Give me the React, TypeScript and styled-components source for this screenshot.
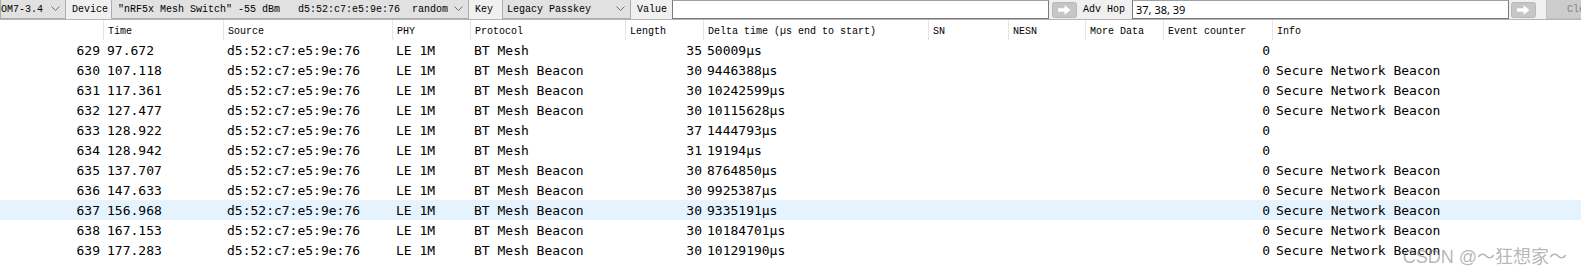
import styled, { createGlobalStyle } from 'styled-components'

const GlobalStyle = createGlobalStyle`
  html, body {
    margin: 0;
    padding: 0;
    background: #ffffff;
  }
  body {
    width: 1581px;
    height: 275px;
    overflow: hidden;
  }
`

const Page = styled.div`
  position: relative;
  width: 1581px;
  height: 275px;
  overflow: hidden;
  background: #ffffff;
`

const Toolbar = styled.div`
  display: flex;
  align-items: stretch;
  height: 20px;
  box-sizing: border-box;
  background: #f0f0f0;
  border-bottom: 1px solid #b4b4b4;
  font-family: "Liberation Mono", "DejaVu Sans Mono", monospace;
  font-size: 10px;
  color: #000;
  white-space: pre;
`

const Combo = styled.div<{ $w: number; $pl?: number }>`
  display: flex;
  align-items: center;
  justify-content: space-between;
  width: ${({ $w }) => $w}px;
  flex: none;
  box-sizing: border-box;
  height: 19px;
  padding: 0 5px 0 ${({ $pl }) => $pl ?? 4}px;
  background: #e1e1e1;
  border: 1px solid #adadad;
  border-top: none;
`

const Label = styled.div<{ $w: number }>`
  display: flex;
  align-items: center;
  width: ${({ $w }) => $w}px;
  flex: none;
  box-sizing: border-box;
  padding-left: 6px;
`

const TextInput = styled.div<{ $w: number }>`
  display: flex;
  align-items: center;
  width: ${({ $w }) => $w}px;
  flex: none;
  box-sizing: border-box;
  height: 19px;
  padding-left: 3px;
  background: #ffffff;
  border: 1px solid #7a7a7a;
  border-top-color: #a0a0a0;
  font-family: "Noto Sans", "Liberation Sans", sans-serif;
  font-size: 11px;
`

const ArrowButton = styled.div<{ $ml: number }>`
  display: flex;
  align-items: center;
  flex: none;
  margin-left: ${({ $ml }) => $ml}px;
  height: 19px;
`

const ClearButton = styled.div`
  display: flex;
  align-items: center;
  flex: 1;
  box-sizing: border-box;
  height: 19px;
  margin-left: 10px;
  padding-left: 20px;
  background: #cccccc;
  border: 1px solid #bfbfbf;
  border-top: none;
  color: #838383;
`

const Table = styled.div`
  display: flex;
  flex-direction: column;
`

const columns = '103px 120px 169px 78px 155px 78px 225px 80px 77px 78px 109px 1fr'

const HeaderRow = styled.div`
  display: grid;
  grid-template-columns: ${columns};
  height: 20px;
  font-family: "Liberation Mono", "DejaVu Sans Mono", monospace;
  font-size: 10px;
  color: #000;
`

const HeaderCell = styled.div<{ $first?: boolean }>`
  display: flex;
  align-items: center;
  padding: 2px 0 0 4px;
  border-left: ${({ $first }) => ($first ? 'none' : '1px solid #e5e5e5')};
  white-space: pre;
  overflow: hidden;
`

const Row = styled.div<{ $selected?: boolean }>`
  display: grid;
  grid-template-columns: ${columns};
  height: 20px;
  align-items: center;
  background: ${({ $selected }) => ($selected ? '#e5f3ff' : 'transparent')};
  font-family: "DejaVu Sans Mono", "Liberation Mono", monospace;
  font-size: 13px;
  color: #000;
`

const Cell = styled.div<{ $right?: boolean; $pr?: number }>`
  text-align: ${({ $right }) => ($right ? 'right' : 'left')};
  padding: ${({ $right, $pr }) => ($right ? `0 ${$pr ?? 2}px 0 0` : '0 0 0 4px')};
  white-space: pre;
  overflow: hidden;
`

const Watermark = styled.div`
  position: absolute;
  right: 14px;
  bottom: 7px;
  font-family: "Liberation Sans", "Noto Sans CJK SC", sans-serif;
  font-size: 18px;
  color: rgba(120, 120, 120, 0.55);
  white-space: pre;
  pointer-events: none;
`

function Chevron() {
  return (
    <svg width="9" height="6" viewBox="0 0 9 6">
      <polyline points="0.5,0.5 4.5,4.5 8.5,0.5" fill="none" stroke="#6d6d6d" strokeWidth="1" />
    </svg>
  )
}

function GoArrow() {
  return (
    <svg width="25" height="16" viewBox="0 0 25 16">
      <rect x="0.5" y="0.5" width="24" height="15" rx="2" fill="#c6c6c6" stroke="#b8b8b8" />
      <path d="M6 6.2 H12.5 V3.2 L18.5 8 L12.5 12.8 V9.8 H6 Z" fill="#ffffff" />
    </svg>
  )
}

const headers = ['', 'Time', 'Source', 'PHY', 'Protocol', 'Length', 'Delta time (µs end to start)', 'SN', 'NESN', 'More Data', 'Event counter', 'Info']

type Packet = {
  no: number
  time: string
  protocol: string
  length: number
  delta: string
  info: string
}

const packets: Packet[] = [
  { no: 629, time: '97.672', protocol: 'BT Mesh', length: 35, delta: '50009µs', info: '' },
  { no: 630, time: '107.118', protocol: 'BT Mesh Beacon', length: 30, delta: '9446388µs', info: 'Secure Network Beacon' },
  { no: 631, time: '117.361', protocol: 'BT Mesh Beacon', length: 30, delta: '10242599µs', info: 'Secure Network Beacon' },
  { no: 632, time: '127.477', protocol: 'BT Mesh Beacon', length: 30, delta: '10115628µs', info: 'Secure Network Beacon' },
  { no: 633, time: '128.922', protocol: 'BT Mesh', length: 37, delta: '1444793µs', info: '' },
  { no: 634, time: '128.942', protocol: 'BT Mesh', length: 31, delta: '19194µs', info: '' },
  { no: 635, time: '137.707', protocol: 'BT Mesh Beacon', length: 30, delta: '8764850µs', info: 'Secure Network Beacon' },
  { no: 636, time: '147.633', protocol: 'BT Mesh Beacon', length: 30, delta: '9925387µs', info: 'Secure Network Beacon' },
  { no: 637, time: '156.968', protocol: 'BT Mesh Beacon', length: 30, delta: '9335191µs', info: 'Secure Network Beacon' },
  { no: 638, time: '167.153', protocol: 'BT Mesh Beacon', length: 30, delta: '10184701µs', info: 'Secure Network Beacon' },
  { no: 639, time: '177.283', protocol: 'BT Mesh Beacon', length: 30, delta: '10129190µs', info: 'Secure Network Beacon' },
]

export default function App() {
  return (
    <Page>
      <GlobalStyle />
      <Toolbar>
        <Combo $w={66} $pl={0}>
          <span>OM7-3.4</span>
          <Chevron />
        </Combo>
        <Label $w={45}>Device</Label>
        <Combo $w={358} $pl={6}>
          <span>{'"nRF5x Mesh Switch" -55 dBm   d5:52:c7:e5:9e:76  random'}</span>
          <Chevron />
        </Combo>
        <Label $w={33}>Key</Label>
        <Combo $w={129}>
          <span>Legacy Passkey</span>
          <Chevron />
        </Combo>
        <Label $w={41}>Value</Label>
        <TextInput $w={377} />
        <ArrowButton $ml={3}>
          <GoArrow />
        </ArrowButton>
        <Label $w={55}>Adv Hop</Label>
        <TextInput $w={377}>37, 38, 39</TextInput>
        <ArrowButton $ml={2}>
          <GoArrow />
        </ArrowButton>
        <ClearButton>Cle</ClearButton>
      </Toolbar>

      <Table>
        <HeaderRow>
          {headers.map((h, i) => (
            <HeaderCell key={i} $first={i === 0}>
              {h}
            </HeaderCell>
          ))}
        </HeaderRow>
        {packets.map(p => (
          <Row key={p.no} $selected={p.no === 637}>
            <Cell $right $pr={3}>{p.no}</Cell>
            <Cell>{p.time}</Cell>
            <Cell>d5:52:c7:e5:9e:76</Cell>
            <Cell>LE 1M</Cell>
            <Cell>{p.protocol}</Cell>
            <Cell $right $pr={1}>{p.length}</Cell>
            <Cell>{p.delta}</Cell>
            <Cell />
            <Cell />
            <Cell />
            <Cell $right>0</Cell>
            <Cell>{p.info}</Cell>
          </Row>
        ))}
      </Table>

      <Watermark>CSDN @～狂想家～</Watermark>
    </Page>
  )
}
